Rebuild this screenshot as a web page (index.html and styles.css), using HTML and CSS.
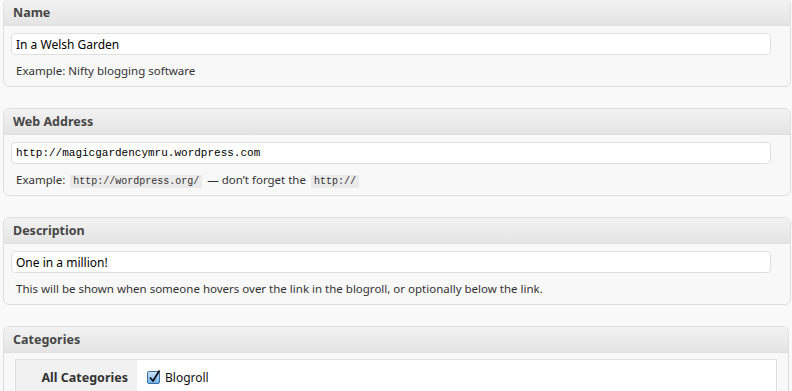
FILE: index.html
```html
<!DOCTYPE html>
<html lang="en">
<head>
  <meta charset="UTF-8">
  <title>Edit Link</title>
  <link rel="stylesheet" href="styles.css">
</head>
<body>
  <div class="wrap">
    <div class="postbox">
      <h3 class="hndle">Name</h3>
      <div class="inside">
        <input type="text" class="field" value="In a Welsh Garden">
        <p class="hint">Example: Nifty blogging software</p>
      </div>
    </div>

    <div class="postbox">
      <h3 class="hndle">Web Address</h3>
      <div class="inside">
        <input type="text" class="field code-field" value="http://magicgardencymru.wordpress.com">
        <p class="hint">Example: <code>http://wordpress.org/</code> — don’t forget the <code>http://</code></p>
      </div>
    </div>

    <div class="postbox">
      <h3 class="hndle">Description</h3>
      <div class="inside">
        <input type="text" class="field" value="One in a million!">
        <p class="hint">This will be shown when someone hovers over the link in the blogroll, or optionally below the link.</p>
      </div>
    </div>

    <div class="postbox narrow">
      <h3 class="hndle">Categories</h3>
      <div class="inside cats">
        <div class="cat-table">
          <div class="cat-label">All Categories</div>
          <ul class="cat-list">
            <li>
              <svg class="check" width="14" height="14" viewBox="0 0 14 14">
                <defs>
                  <linearGradient id="cb" x1="0" y1="0" x2="0" y2="1">
                    <stop offset="0" stop-color="#cfe6fb"/>
                    <stop offset="1" stop-color="#6fb2ee"/>
                  </linearGradient>
                </defs>
                <rect x="0.5" y="1.5" width="12" height="12" rx="1.5" fill="url(#cb)" stroke="#3d6d9c"/>
                <path d="M3 7.5 L6 11 L12.5 0.5" fill="none" stroke="#111" stroke-width="1.8" stroke-linejoin="round"/>
              </svg>
              Blogroll
            </li>
            <li class="child">Garden stuff</li>
          </ul>
        </div>
      </div>
    </div>
  </div>
</body>
</html>
```

FILE: styles.css
```css
* {
  margin: 0;
  padding: 0;
  box-sizing: border-box;
}

body {
  background: #f9f9f9;
  font-family: 'Noto Sans', 'DejaVu Sans', sans-serif;
  font-size: 11.5px;
  color: #333;
  overflow: hidden;
}

.wrap {
  margin: -1px 1px 0 3px;
}

.postbox {
  background: #f8f8f8;
  border: 1px solid #dfdfdf;
  border-radius: 6px;
  margin-bottom: 21px;
  overflow: hidden;
}

.postbox.narrow {
  margin-right: 2px;
}

.hndle {
  height: 26px;
  line-height: 25px;
  padding-left: 9px;
  font-size: 12.5px;
  font-weight: bold;
  color: #464646;
  background: linear-gradient(#f2f2f2, #e4e4e4);
  border-bottom: 1px solid #dfdfdf;
}

.inside {
  padding: 7px 19px 7px 7px;
}

.field {
  display: block;
  width: 100%;
  height: 22px;
  padding: 0 4px;
  border: 1px solid #dfdfdf;
  border-radius: 4px;
  background: #fff;
  font-family: 'Noto Sans', 'DejaVu Sans', sans-serif;
  font-size: 12px;
  color: #000;
  outline: none;
}

.code-field {
  font-family: 'Liberation Mono', monospace;
  font-size: 11px;
}

.hint {
  margin-top: 7px;
  padding-left: 5px;
  height: 17px;
  line-height: 17px;
  color: #333;
}

.hint code {
  font-family: 'Liberation Mono', monospace;
  font-size: 10px;
  background: #eaeaea;
  padding: 1px 3px;
  margin: 0 2px;
}

.inside.cats {
  padding: 6px 11px 0 11px;
}

.cat-table {
  display: flex;
  border: 1px solid #dfdfdf;
  background: #fff;
  min-height: 60px;
}

.cat-label {
  width: 121px;
  background: #f1f1f1;
  text-align: right;
  padding: 9px 9px 0 0;
  font-size: 12.5px;
  font-weight: bold;
  color: #333;
}

.cat-list {
  list-style: none;
  padding: 7px 0 0 10px;
  font-size: 12px;
  color: #111;
}

.cat-list li {
  display: flex;
  align-items: center;
  gap: 4px;
  height: 20px;
}

.cat-list li.child {
  padding-left: 42px;
}
```
